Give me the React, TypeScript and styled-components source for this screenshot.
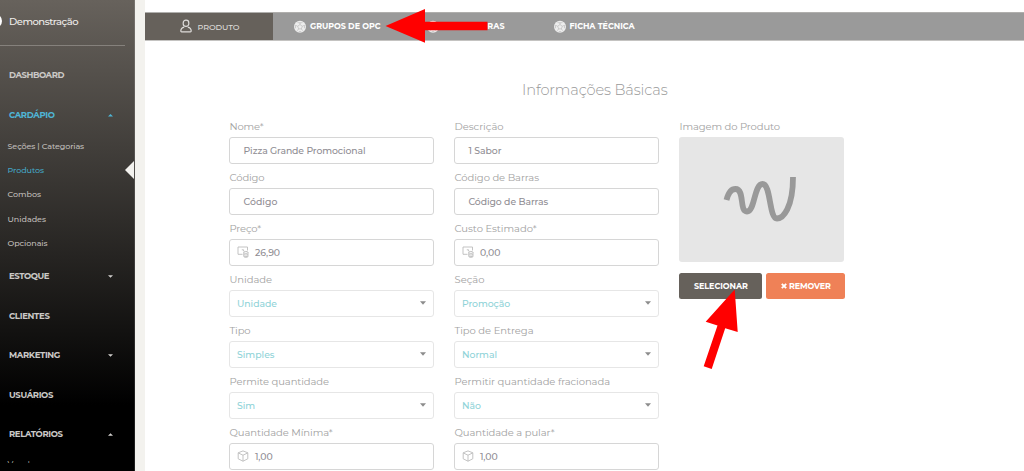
import React, { useLayoutEffect, useRef, useState } from 'react';
import styled, { createGlobalStyle } from 'styled-components';

const GlobalStyle = createGlobalStyle`
  * { box-sizing: border-box; }
  body {
    margin: 0;
    background: #fff;
    font-family: Montserrat, Inter, "Liberation Sans", sans-serif;
    overflow: hidden;
  }
`;

const Page = styled.div`
  position: relative;
  display: flex;
  width: 1024px;
  height: 471px;
  overflow: hidden;
`;

const TextRun = styled.span`
  display: inline-block;
  white-space: nowrap;
`;

/* Tracks a text run out or in so that it takes the given width. */
function Fit({ width, children }: { width: number; children: string }) {
  const ref = useRef<HTMLSpanElement>(null);
  const [spacing, setSpacing] = useState(0);
  useLayoutEffect(() => {
    if (ref.current) {
      const natural = ref.current.getBoundingClientRect().width;
      setSpacing((width - natural) / children.length);
    }
  }, [width, children]);
  return <TextRun ref={ref} style={{ letterSpacing: `${spacing}px` }}>{children}</TextRun>;
}

/* Sidebar */
const Sidebar = styled.aside`
  width: 135px;
  height: 471px;
  flex: none;
  background: linear-gradient(#67625c 0, #000 405px);
  border-right: 1px solid rgba(255, 255, 255, 0.12);
  overflow: hidden;
`;

const Account = styled.div`
  display: flex;
  align-items: center;
  height: 46px;
  width: 125px;
  padding: 0 0 3px 9px;
  border-bottom: 1px solid #85817c;
  color: #efedeb;
  font-size: 10px;
  font-weight: 500;
`;

const Avatar = styled.div`
  flex: none;
  width: 14px;
  height: 14px;
  margin-left: -21px;
  margin-right: 7px;
  border-radius: 50%;
  background: #fff;
`;

const Menu = styled.nav`
  padding-top: 9.5px;
`;

const MenuItem = styled.div<{ $active?: boolean }>`
  display: flex;
  align-items: center;
  justify-content: space-between;
  height: 39.5px;
  padding: 0 21px 0 9px;
  font-size: 8.5px;
  font-weight: 700;
  color: ${p => (p.$active ? '#4fb5d6' : '#cbc9c7')};
`;

const MenuCaret = styled.i<{ $up?: boolean; $active?: boolean }>`
  width: 5px;
  height: 2.5px;
  margin-top: 1px;
  background: ${p => (p.$active ? '#4fb5d6' : '#d2d0ce')};
  clip-path: ${p => (p.$up ? 'polygon(50% 0, 100% 100%, 0 100%)' : 'polygon(0 0, 100% 0, 50% 100%)')};
`;

const SubMenu = styled.div`
  height: 122.8px;
  margin-top: -1px;
`;

const SubItem = styled.div<{ $active?: boolean }>`
  display: flex;
  align-items: center;
  justify-content: space-between;
  height: 24.3px;
  padding-left: 7.5px;
  font-size: 8px;
  font-weight: 500;
  color: ${p => (p.$active ? '#44a5c4' : '#c0bebb')};
`;

const Notch = styled.i`
  width: 10px;
  height: 20px;
  margin-right: -1px;
  background: #f3f2ee;
  clip-path: polygon(100% 0, 100% 100%, 0 50%);
`;

const ClippedItem = styled.div`
  height: 9.5px;
  padding: 6px 0 0 7.5px;
  overflow: hidden;
  font-size: 8.3px;
  line-height: 10px;
  color: #c2c0bd;
`;

const Gutter = styled.div`
  flex: none;
  width: 10px;
  background: #f3f2ee;
`;

/* Main */
const Main = styled.main`
  flex: 1;
  padding-top: 12px;
`;

const Tabs = styled.div`
  display: flex;
  height: 29px;
  background: #9a9a9a;
  border-top: 1px solid #b0afad;
  border-bottom: 1px solid #c4c3c1;
`;

const Tab = styled.div<{ $width: number; $pad: number; $active?: boolean }>`
  display: flex;
  align-items: center;
  flex: none;
  width: ${p => p.$width}px;
  padding-left: ${p => p.$pad}px;
  padding-bottom: ${p => (p.$active ? 0 : 2)}px;
  gap: ${p => (p.$active ? 6 : 4)}px;
  background: ${p => (p.$active ? '#66615b' : 'transparent')};
  color: ${p => (p.$active ? '#dedcda' : '#fff')};
  font-size: 8px;
  font-weight: ${p => (p.$active ? 500 : 700)};

  svg { flex: none; }
`;

const PersonSvg = styled.svg`
  margin-top: -1px;
`;

const BallSvg = styled.svg`
  margin-top: 1px;
`;

const Title = styled.h5`
  height: 22px;
  margin: 38px 0 17px 377px;
  font-size: 14.6px;
  line-height: 22px;
  font-weight: 300;
  color: #999;
`;

const FormArea = styled.div`
  display: flex;
  gap: 20px;
  padding-left: 84px;
`;

const Column = styled.div<{ $width: number }>`
  width: ${p => p.$width}px;
`;

const Field = styled.div`
  height: 51px;
`;

const Label = styled.div`
  height: 19px;
  line-height: 17px;
  padding-left: 0.5px;
  font-size: 10px;
  color: #a2a2a2;
`;

const Control = styled.div<{ $kind: Kind }>`
  display: flex;
  align-items: center;
  height: 27px;
  padding: 0 7px 1px ${p => (p.$kind === 'text' ? 13.5 : 7)}px;
  border: 1px solid ${p => (p.$kind === 'select' ? '#e6e6e6' : '#d6d6d6')};
  border-radius: 3px;
  background: #fff;
  font-size: 9.3px;
  font-weight: 500;
  color: ${p => (p.$kind === 'select' ? '#8fd3d8' : '#8f8d93')};

  svg { flex: none; margin-right: 6px; }
`;

const SelectCaret = styled.i`
  width: 6px;
  height: 3.5px;
  margin-left: auto;
  background: #8c8c8c;
  clip-path: polygon(0 0, 100% 0, 50% 100%);
`;

const Preview = styled.div`
  width: 165px;
  height: 125px;
  border-radius: 3px;
  background: #e6e6e6;
`;

const Actions = styled.div`
  display: flex;
  gap: 4px;
  margin-top: 11.4px;
  padding-left: 0.4px;
`;

const Button = styled.button<{ $width: number; $color: string }>`
  display: flex;
  align-items: center;
  justify-content: center;
  gap: 2px;
  flex: none;
  width: ${p => p.$width}px;
  height: 26px;
  padding: 0;
  border: 0;
  border-radius: 2.5px;
  background: ${p => p.$color};
  color: #fff;
  font: 700 8px Montserrat, Inter, sans-serif;
`;

const Annotations = styled.svg`
  position: absolute;
  inset: 0;
  pointer-events: none;
`;

const PersonIcon = () => (
  <PersonSvg width="12" height="14" viewBox="0 0 12 14" fill="none" stroke="#dedcda" strokeWidth="1.2">
    <rect x="3.2" y="1.2" width="5.6" height="6.2" rx="2.7" />
    <path d="M4.200 8.200C2 8.600.9 9.600.8 12c0 .5.3.8.8.8h8.800c.5 0 .8-.3.8-.8-.1-2.400-1.200-3.400-3.400-3.800" />
  </PersonSvg>
);

const BallIcon = () => (
  <BallSvg width="12" height="13" viewBox="0 0 12 13">
    <circle cx="6" cy="6.800" r="6" fill="#ededed" />
    <g fill="none" stroke="#b4b4b4" strokeWidth=".6">
      <path d="M6 4.600l2.300 1.600-.9 2.700H4.600l-.9-2.700zM6 4.600V2.500M8.300 6.200l2-.8M7.400 8.900l1.300 1.800M4.600 8.900l-1.300 1.800M3.700 6.200l-2-.8" />
      <path d="M3.500 2.600L6 2.900l2.500-.3M10.700 5l-.3 3.200M1.300 5l.3 3.200M4.800 11.600h2.400" />
    </g>
  </BallSvg>
);

const MoneyIcon = () => (
  <svg width="12" height="12" viewBox="0 0 12 12" fill="none" stroke="#bcbcbc" strokeWidth=".9">
    <path d="M5.500 8.300H1V1h9.500v3.500" />
    <path d="M4.800 3.800h1.800v1.500" />
    <ellipse cx="8.900" cy="6.400" rx="2.100" ry="1" />
    <path d="M6.800 6.400v4c0 .6 1 1 2.100 1s2.100-.4 2.100-1v-4M6.800 8.400c.6.800 3.600.8 4.200 0M6.800 10c.6.800 3.600.8 4.200 0" />
  </svg>
);

const BoxIcon = () => (
  <svg width="12" height="12" viewBox="0 0 12 12" fill="none" stroke="#bcbcbc" strokeWidth=".9" strokeLinejoin="round">
    <path d="M6 .9l4.800 1.900v6L6 11.200 1.200 8.800v-6zM1.200 2.900L6 5.200l4.800-2.300M6 5.200v6" />
  </svg>
);

const CrossIcon = () => (
  <svg width="6" height="6" viewBox="0 0 6 6" stroke="#fff" strokeWidth="1.900">
    <path d="M.8.800l4.400 4.400M5.200.800L.8 5.200" />
  </svg>
);

type Kind = 'text' | 'money' | 'box' | 'select';
type FieldData = [label: string, labelWidth: number, kind: Kind, value: string, valueWidth: number];

const leftFields: FieldData[] = [
  ['Nome*', 34, 'text', 'Pizza Grande Promocional', 122],
  ['Código', 35, 'text', 'Código', 34],
  ['Preço*', 31.5, 'money', '26,90', 25],
  ['Unidade', 42.5, 'select', 'Unidade', 40],
  ['Tipo', 21, 'select', 'Simples', 37.5],
  ['Permite quantidade', 99.5, 'select', 'Sim', 18],
  ['Quantidade Mínima*', 103, 'box', '1,00', 17.5],
];

const rightFields: FieldData[] = [
  ['Descrição', 49, 'text', '1 Sabor', 33],
  ['Código de Barras', 84.5, 'text', 'Código de Barras', 79.5],
  ['Custo Estimado*', 82, 'money', '0,00', 20.5],
  ['Seção', 30, 'select', 'Promoção', 48],
  ['Tipo de Entrega', 79, 'select', 'Normal', 35],
  ['Permitir quantidade fracionada', 155.5, 'select', 'Não', 19],
  ['Quantidade a pular*', 100, 'box', '1,00', 17.5],
];

const FieldList = ({ fields }: { fields: FieldData[] }) => (
  <Column $width={205}>
    {fields.map(([label, labelWidth, kind, value, valueWidth]) => (
      <Field key={label}>
        <Label><Fit width={labelWidth}>{label}</Fit></Label>
        <Control $kind={kind}>
          {kind === 'money' && <MoneyIcon />}
          {kind === 'box' && <BoxIcon />}
          <Fit width={valueWidth}>{value}</Fit>
          {kind === 'select' && <SelectCaret />}
        </Control>
      </Field>
    ))}
  </Column>
);

export default function App() {
  return (
    <Page>
      <GlobalStyle />
      <Sidebar>
        <Account>
          <Avatar />
          <Fit width={69}>Demonstração</Fit>
        </Account>
        <Menu>
          <MenuItem><Fit width={55}>DASHBOARD</Fit></MenuItem>
          <MenuItem $active><Fit width={45.5}>CARDÁPIO</Fit><MenuCaret $up $active /></MenuItem>
          <SubMenu>
            <SubItem><Fit width={76.5}>Seções | Categorias</Fit></SubItem>
            <SubItem $active><Fit width={36.5}>Produtos</Fit><Notch /></SubItem>
            <SubItem><Fit width={33.5}>Combos</Fit></SubItem>
            <SubItem><Fit width={38.5}>Unidades</Fit></SubItem>
            <SubItem><Fit width={40}>Opcionais</Fit></SubItem>
          </SubMenu>
          <MenuItem><Fit width={40}>ESTOQUE</Fit><MenuCaret /></MenuItem>
          <MenuItem><Fit width={40.5}>CLIENTES</Fit></MenuItem>
          <MenuItem><Fit width={51}>MARKETING</Fit><MenuCaret /></MenuItem>
          <MenuItem><Fit width={44}>USUÁRIOS</Fit></MenuItem>
          <MenuItem><Fit width={53.5}>RELATÓRIOS</Fit><MenuCaret $up /></MenuItem>
          <ClippedItem><Fit width={32}>Vendas</Fit></ClippedItem>
        </Menu>
      </Sidebar>
      <Gutter />
      <Main>
        <Tabs>
          <Tab $width={128} $pad={34.5} $active><PersonIcon /><Fit width={42}>PRODUTO</Fit></Tab>
          <Tab $width={133} $pad={21}><BallIcon /><Fit width={70.5}>GRUPOS DE OPC</Fit></Tab>
          <Tab $width={127} $pad={21}><BallIcon /><Fit width={61.5}>IMPRESSORAS</Fit></Tab>
          <Tab $width={124} $pad={20.5}><BallIcon /><Fit width={65}>FICHA TÉCNICA</Fit></Tab>
        </Tabs>
        <Title><Fit width={145.5}>Informações Básicas</Fit></Title>
        <FormArea>
          <FieldList fields={leftFields} />
          <FieldList fields={rightFields} />
          <Column $width={167}>
            <Label><Fit width={100.5}>Imagem do Produto</Fit></Label>
            <Preview>
              <svg width="165" height="125" fill="none" stroke="#999" strokeWidth="5.800">
                <path d="M47.500 63C49 57 52 52 56.500 52C66 52 60 74.500 68 74.500C76 74.500 75 47 83.500 47C92 47 90 81.500 98 81.500C104 81.500 114 71 114 40" />
              </svg>
            </Preview>
            <Actions>
              <Button $width={83} $color="#66615b"><Fit width={54}>SELECIONAR</Fit></Button>
              <Button $width={79} $color="#ef8157"><CrossIcon /><Fit width={42}>REMOVER</Fit></Button>
            </Actions>
          </Column>
        </FormArea>
      </Main>
      <Annotations width="1024" height="471" fill="#f00">
        <path d="M385.500 26L425 9V21.700H487.500V30.200H425V42.700Z" />
        <path d="M734.700 289.500L737.700 332L725.200 328.200L711.700 369L703.700 366.300L717.500 325.500L705.700 321.700Z" />
      </Annotations>
    </Page>
  );
}
